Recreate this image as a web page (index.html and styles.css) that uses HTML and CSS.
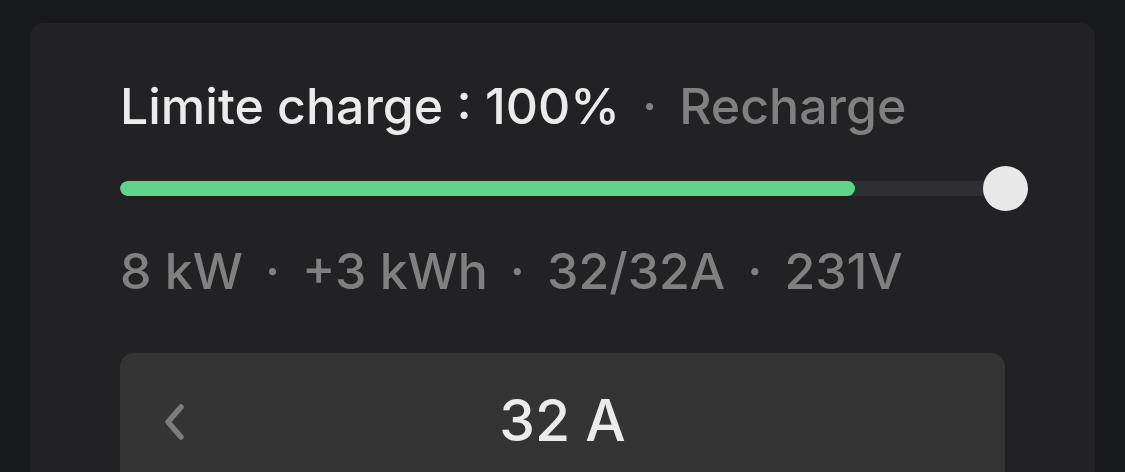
FILE: index.html
```html
<!DOCTYPE html>
<html lang="fr">
<head>
  <meta charset="UTF-8" />
  <title>Recharge</title>
  <link rel="stylesheet" href="styles.css">
</head>
<body>

  <div class="carte">
    <div class="titre">
      <span class="limite">Limite charge : 100%</span>
      <span class="point">·</span>
      <span class="etat">Recharge</span>
    </div>

    <div class="curseur">
      <div class="piste">
        <div class="rempli" style="width: 83%;"></div>
      </div>
      <div class="bouton-curseur"></div>
    </div>

    <div class="infos">
      <span>8 kW</span>
      <span class="point">·</span>
      <span>+3 kWh</span>
      <span class="point">·</span>
      <span>32/32A</span>
      <span class="point">·</span>
      <span>231V</span>
    </div>

    <div class="reglage">
      <button class="fleche">
        <svg width="24" height="38" viewBox="0 0 24 38">
          <path d="M17 4 L4 19 L17 34" fill="none" stroke="#7d7d7d" stroke-width="5.5" stroke-linecap="round" stroke-linejoin="round"/>
        </svg>
      </button>
      <div class="valeur">32 A</div>
      <div class="vide"></div>
    </div>
  </div>

</body>
</html>
```

FILE: styles.css
```css
body {
  margin: 0;
  padding: 23px 30px 0;
  background: #18191b;
  font-family: Inter, 'Noto Sans', sans-serif;
  overflow: hidden;
  height: 472px;
  box-sizing: border-box;
}

/* Carte principale */
.carte {
  background: #222224;
  border-radius: 14px 14px 0 0;
  padding: 58px 90px 0;
  height: 600px;
  display: flex;
  flex-direction: column;
}

.titre {
  font-size: 50px;
  line-height: 1;
  font-weight: 500;
  display: flex;
  gap: 22px;
  white-space: nowrap;
}

.limite {
  color: #ebebeb;
}

.etat {
  color: #808080;
}

.point {
  color: #808080;
}

/* Curseur de limite */
.curseur {
  position: relative;
  height: 45px;
  margin-top: 35px;
  display: flex;
  align-items: center;
}

.piste {
  width: 100%;
  height: 15px;
  border-radius: 8px;
  background: #2e2f33;
  overflow: hidden;
}

.rempli {
  height: 100%;
  background: #5fd58b;
  border-radius: 8px;
}

.bouton-curseur {
  position: absolute;
  right: -23px;
  top: 0;
  width: 45px;
  height: 45px;
  border-radius: 50%;
  background: #e8e8e8;
}

.infos {
  margin-top: 35px;
  font-size: 50px;
  line-height: 1;
  font-weight: 500;
  color: #808080;
  display: flex;
  gap: 22px;
  white-space: nowrap;
}

/* Réglage de l'intensité */
.reglage {
  margin-top: 57px;
  background: #343434;
  border-radius: 14px;
  height: 140px;
  display: grid;
  grid-template-columns: 100px 1fr 100px;
  align-items: start;
  padding-top: 39px;
  box-sizing: border-box;
}

.fleche {
  background: none;
  border: none;
  padding: 0;
  margin: 11px 0 0 44px;
  width: 24px;
  height: 38px;
  cursor: pointer;
}

.fleche svg {
  display: block;
}

.valeur {
  font-size: 57px;
  line-height: 1;
  font-weight: 500;
  color: #ebebeb;
  text-align: center;
}
```
